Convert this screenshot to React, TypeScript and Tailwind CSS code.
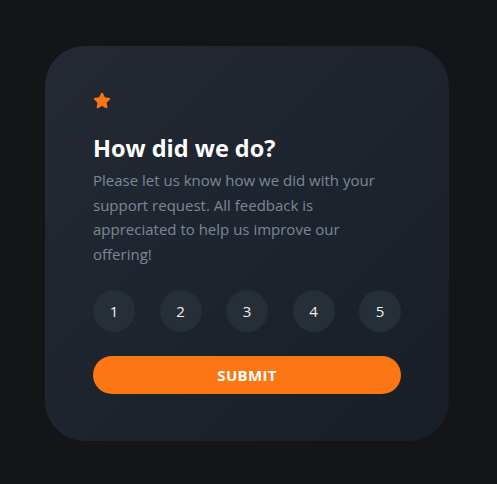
const ratings = [1, 2, 3, 4, 5];

function StarIcon() {
  return (
    <svg className="block h-[18px] w-[18px]" viewBox="0 0 17 16" fill="none">
      <path
        d="M9.204.408l2.01 4.074 4.498.654a.75.75 0 0 1 .415 1.28l-3.254 3.172.768 4.48a.75.75 0 0 1-1.088.79L8.53 12.745l-4.023 2.114a.75.75 0 0 1-1.088-.791l.768-4.479L.933 6.417a.75.75 0 0 1 .416-1.28l4.497-.654L7.857.408a.75.75 0 0 1 1.347 0z"
        fill="#FC7614"
      />
    </svg>
  );
}

function RatingCard() {
  return (
    <div className="flex w-[404px] flex-col rounded-[40px] bg-[linear-gradient(135deg,#232a34_0%,#181e27_100%)] px-[48px] pt-[46px] pb-[47px] font-['Open_Sans','Noto_Sans',sans-serif]">
      <div className="flex h-[18px] items-center">
        <StarIcon />
      </div>
      <h1 className="mt-[22px] text-[23.5px] font-bold leading-[32px] text-white">How did we do?</h1>
      <p className="mt-[4px] w-[298px] text-[15px] leading-[24.6px] text-[#7c8798]">
        Please let us know how we did with your support request. All feedback is appreciated to help us improve our
        offering!
      </p>
      <div className="mt-[24px] flex items-center justify-between">
        {ratings.map((n) => (
          <button
            key={n}
            className="flex h-[42px] w-[42px] items-center justify-center rounded-full bg-[#262e38] text-[15px] text-[#f0f2f5]"
          >
            {n}
          </button>
        ))}
      </div>
      <button className="mt-[24px] h-[38px] w-full rounded-full bg-[#fc7614] text-[15px] font-bold tracking-[0.3px] text-white">
        SUBMIT
      </button>
    </div>
  );
}

export default function App() {
  return (
    <div className="flex min-h-[484px] w-full items-start bg-[#131518] pl-[45px] pt-[46px]">
      <RatingCard />
    </div>
  );
}
